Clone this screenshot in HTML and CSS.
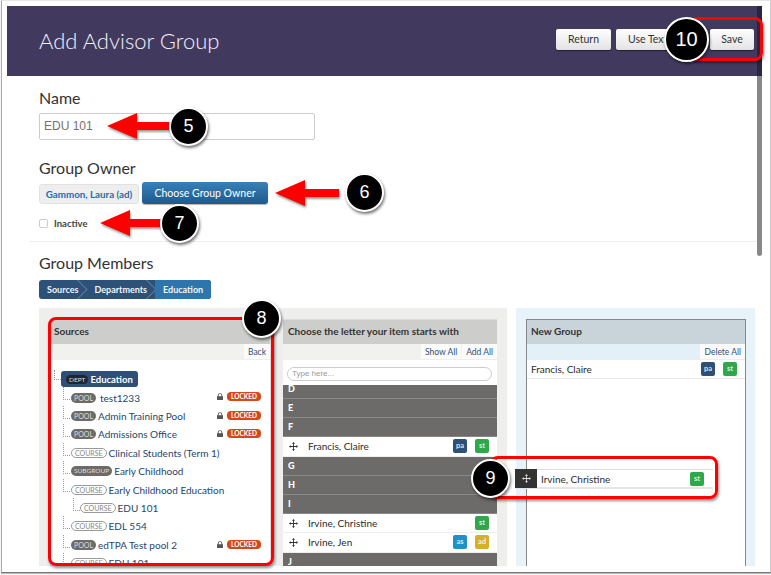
FILE: index.html
```html
<!DOCTYPE html>
<html lang="en">
<head>
<meta charset="utf-8">
<title>Add Advisor Group</title>
<link rel="stylesheet" href="styles.css">
</head>
<body>
<svg class="defs" width="0" height="0" aria-hidden="true">
  <defs>
    <symbol id="move" viewBox="0 0 12 12"><path d="M6 0 8 2.2H6.6V5.4H9.8V4L12 6 9.8 8V6.6H6.6V9.8H8L6 12 4 9.8H5.4V6.6H2.2V8L0 6 2.2 4V5.4H5.4V2.2H4Z"/></symbol>
    <symbol id="lock" viewBox="0 0 8 9"><path d="M1 4V2.6a3 2.6 0 0 1 6 0V4h.5c.3 0 .5.2.5.5v4c0 .3-.2.5-.5.5h-7C.2 9 0 8.8 0 8.500v-4C0 4.200.2 4 .5 4Zm1.200 0h3.600V2.600a1.800 1.600 0 0 0-3.600 0Z"/></symbol>
    <symbol id="arrow" viewBox="0 0 64 26"><path d="M0 13 30 0V9H64V17H30V26Z"/></symbol>
  </defs>
</svg>
<div class="window">
  <header class="topbar">
    <h1>Add Advisor Group</h1>
    <div class="actions">
      <button class="btn btn-return">Return</button>
      <button class="btn btn-text">Use Text Only</button>
      <button class="btn btn-save">Save</button>
    </div>
  </header>
  <main class="content">
    <section class="form-top">
      <h2 class="name-title">Name</h2>
      <div class="text-input">EDU 101</div>
      <h2 class="owner-title">Group Owner</h2>
      <div class="owner">
        <span class="owner-chip">Gammon, Laura (ad)</span>
        <button class="btn-primary">Choose Group Owner</button>
      </div>
      <label class="inactive"><span class="checkbox"></span>Inactive</label>
    </section>
    <section class="members">
      <h2>Group Members</h2>
      <nav class="crumbs">
        <span class="crumb">Sources</span>
        <span class="crumb">Departments</span>
        <span class="crumb crumb-active">Education</span>
      </nav>
      <div class="columns">
        <div class="well well-grey">
          <div class="panel panel-sources">
            <div class="panel-head">Sources</div>
            <div class="toolbar"><span class="tool">Back</span></div>
            <ul class="tree">
              <li class="node"><span class="dept"><b>DEPT</b>Education</span></li>
              <li class="node l1"><i class="tag tag-dark">POOL</i><a class="wide">test1233</a><svg class="lock"><use href="#lock"/></svg><i class="locked">LOCKED</i></li>
              <li class="node l1"><i class="tag tag-dark">POOL</i><a>Admin Training Pool</a><svg class="lock"><use href="#lock"/></svg><i class="locked">LOCKED</i></li>
              <li class="node l1"><i class="tag tag-dark">POOL</i><a>Admissions Office</a><svg class="lock"><use href="#lock"/></svg><i class="locked">LOCKED</i></li>
              <li class="node l1"><i class="tag tag-line">COURSE</i><a>Clinical Students (Term 1)</a></li>
              <li class="node l1"><i class="tag tag-dark tag-sub">SUBGROUP</i><a>Early Childhood</a></li>
              <li class="node l1"><i class="tag tag-line">COURSE</i><a>Early Childhood Education</a></li>
              <li class="node l2"><i class="tag tag-line">COURSE</i><a>EDU 101</a></li>
              <li class="node l1"><i class="tag tag-line">COURSE</i><a>EDL 554</a></li>
              <li class="node l1"><i class="tag tag-dark">POOL</i><a>edTPA Test pool 2</a><svg class="lock"><use href="#lock"/></svg><i class="locked">LOCKED</i></li>
              <li class="node l1"><i class="tag tag-line">COURSE</i><a>EDU 101</a></li>
            </ul>
          </div>
          <div class="panel panel-letters">
            <div class="panel-head">Choose the letter your item starts with</div>
            <div class="toolbar"><span class="tool">Show All</span><span class="tool">Add All</span></div>
            <div class="search-wrap"><div class="search">Type here...</div></div>
            <div class="letters">
              <div class="letter letter-cut">D</div>
              <div class="letter">E</div>
              <div class="letter">F</div>
              <div class="person"><svg class="grip"><use href="#move"/></svg><span class="pname">Francis, Claire</span><i class="role pa">pa</i><i class="role st">st</i></div>
              <div class="letter">G</div>
              <div class="letter">H</div>
              <div class="letter">I</div>
              <div class="person"><svg class="grip"><use href="#move"/></svg><span class="pname">Irvine, Christine</span><i class="role st">st</i></div>
              <div class="person"><svg class="grip"><use href="#move"/></svg><span class="pname">Irvine, Jen</span><i class="role as">as</i><i class="role ad">ad</i></div>
              <div class="letter">J</div>
            </div>
          </div>
        </div>
        <div class="well well-blue">
          <div class="panel panel-group">
            <div class="panel-head">New Group</div>
            <div class="toolbar"><span class="tool">Delete All</span></div>
            <div class="member"><span class="pname">Francis, Claire</span><i class="role pa">pa</i><i class="role st">st</i></div>
          </div>
        </div>
      </div>
    </section>
  </main>
  <div class="scrollbar"></div>

  <div class="drag-row"><span class="drag-handle"><svg class="grip"><use href="#move"/></svg></span><span class="pname">Irvine, Christine</span><i class="role st">st</i></div>

  <div class="box box-save"></div>
  <div class="box box-sources"></div>
  <div class="box box-drag"></div>
  <svg class="arrow arrow-5"><use href="#arrow"/></svg>
  <svg class="arrow arrow-6"><use href="#arrow"/></svg>
  <svg class="arrow arrow-7"><use href="#arrow"/></svg>
  <div class="step step-5">5</div>
  <div class="step step-6">6</div>
  <div class="step step-7">7</div>
  <div class="step step-8">8</div>
  <div class="step step-9">9</div>
  <div class="step step-10">10</div>
</div>
</body>
</html>
```
FILE: styles.css
```css
* { box-sizing: border-box; }
html, body { margin: 0; padding: 0; background: #fff; }
body { width: 771px; height: 575px; overflow: hidden; font-family: Lato, "Liberation Sans", sans-serif; color: #333; }
.defs { display: block; height: 0; }
h1, h2 { margin: 0; font-weight: 400; }
ul { list-style: none; margin: 0; padding: 0; }
i { font-style: normal; }
button { font-family: inherit; cursor: default; }

.window { position: relative; width: 770px; height: 573px; border-left: 1px solid #aaa; border-bottom: 1px solid #777; border-right: 1px solid #ccc; border-top: 1px solid #e6e6e6; margin-left: 1px; padding: 5px 0 0 5px; overflow: hidden; box-shadow: 0 1px 1px #bbb; }

.topbar { display: flex; align-items: flex-start; justify-content: space-between; width: 750px; height: 70px; background: #423a5e; padding: 22px 3px 0 32px; }
.topbar h1 { font-size: 22px; line-height: 25px; font-weight: 300; color: #f2f1f5; }
.actions { display: flex; gap: 5px; margin-top: 1px; }
.btn { height: 21px; padding: 0; border: 0; border-radius: 2px; background: linear-gradient(#fff, #e3e3e3); box-shadow: 0 1px 1px rgba(0,0,0,.5); color: #333; font-size: 10.500px; line-height: 21px; white-space: nowrap; overflow: hidden; }
.btn-return { width: 55px; }
.btn-text { width: 89px; text-align: left; padding-left: 12px; }
.btn-save { width: 44px; }

.content { width: 750px; height: 491px; overflow: hidden; background: #fff; }
.form-top { height: 166px; padding: 13px 0 0 10px; border-bottom: 1px solid #efefef; margin-left: 22px; }
.name-title, .owner-title, .members h2 { font-size: 16px; line-height: 18px; color: #333; }
.text-input { width: 276px; height: 27px; margin-top: 6px; padding-left: 4px; border: 1px solid #ccc; border-radius: 2px; font-family: "Liberation Sans", sans-serif; font-size: 12px; line-height: 25px; color: #77716c; }
.owner-title { margin-top: 19px; }
.owner { display: flex; align-items: flex-start; gap: 3px; margin-top: 5px; }
.owner-chip { width: 100px; height: 20px; margin-top: 2px; background: #eee; border: 1px solid #e2e2e2; border-radius: 3px; color: #1f6cb0; font-size: 9.800px; font-weight: 700; line-height: 18px; text-align: center; white-space: nowrap; }
.btn-primary { width: 126px; height: 22px; padding: 0; border: 0; border-radius: 3px; background: linear-gradient(#3880b8, #1d5a8e); color: #fff; font-size: 10.500px; line-height: 20px; box-shadow: 0 1px 1px rgba(0,0,0,.3); }
.inactive { display: flex; align-items: center; gap: 6px; margin-top: 12px; height: 14px; font-size: 9.500px; font-weight: 700; color: #444; }
.checkbox { width: 9px; height: 9px; border: 1px solid #ccc; border-radius: 2px; background: #fff; }

.members { padding: 12px 0 0 32px; }
.crumbs { display: flex; width: 172px; height: 19px; margin-top: 8px; border-radius: 3px; overflow: hidden; background: #2d5179; }
.crumb { padding: 0 0 0 8px; color: #f2f5f8; font-size: 9px; font-weight: 700; line-height: 19px; margin-right: 8px; position: relative; }
.crumb::after { content: ""; position: absolute; top: -1px; right: -7px; width: 14px; height: 14px; transform: translateY(3px) rotate(45deg) scale(.95); border-top: 1px solid #5f7fa3; border-right: 1px solid #5f7fa3; }
.crumb-active { flex: 1; margin: 0; background: #2c76ad; padding-left: 8px; }
.crumb-active::after { display: none; }

.columns { display: flex; gap: 9px; margin-top: 9px; width: 716px; height: 258px; }
.well { height: 258px; padding: 11px 10px 0; overflow: hidden; }
.well-grey { display: flex; gap: 12px; width: 468px; background: #eeeeec; }
.well-blue { width: 239px; background: #e7f2f9; }
.panel { height: 247px; background: #fff; overflow: hidden; }
.panel-sources { width: 222px; margin-left: 1px; border: 1px solid #ddd; }
.panel-letters { width: 215px; border-top: 1px solid #ddd; }
.panel-group { width: 220px; border: 1px solid #888; border-bottom: 0; }
.panel-head { height: 24px; padding-left: 5px; background: #cdcdcb; font-size: 10px; font-weight: 700; line-height: 22px; color: #333; white-space: nowrap; }
.panel-sources .panel-head { padding-left: 3px; }
.panel-group .panel-head { background: #c9d3da; padding-left: 4px; }
.toolbar { display: flex; justify-content: flex-end; gap: 1px; height: 16px; background: #f1f1f0; }
.panel-group .toolbar { background: #e4f0f7; }
.tool { padding: 0 4px; background: #fbfbfb; color: #2d4f78; font-size: 8.500px; line-height: 16px; border-bottom: 1px solid #eee; }

.tree { padding: 10px 0 0 10px; }
.node { display: flex; align-items: center; height: 18.400px; position: relative; color: #24456e; font-size: 10px; white-space: nowrap; }
.node a { margin-left: 2px; }
.node a.wide { margin-left: 4px; }
.node::before { content: ""; position: absolute; left: 2px; top: -1px; width: 6px; height: 12px; border-left: 1px dotted #999; border-bottom: 1px dotted #999; }
.l1 { padding-left: 10px; }
.l2 { padding-left: 19px; }
.l2::before { left: 12px; }
.node:first-child { padding-left: 0; }
.node:first-child::before { left: -7px; top: 0; height: 9px; }
.dept { display: flex; align-items: center; gap: 2px; height: 16px; padding: 0 5px; background: #2d4f78; border-radius: 3px; color: #fff; font-weight: 700; font-size: 9.500px; }
.dept b { padding: 0 3px; height: 9px; line-height: 9px; background: #1f2630; border-radius: 5px; font-size: 6.500px; color: #ddd; font-weight: 400; }
.tag { height: 10px; padding: 0 3px; border-radius: 5px; font-size: 7px; line-height: 10px; }
.tag-dark { background: #6d6a67; color: #ddd; }
.tag-sub { font-size: 6.500px; }
.tag-line { border: 1px solid #999; color: #888; line-height: 8px; background: #fff; }
.lock { width: 6px; height: 7px; fill: #555; position: absolute; right: 47px; top: 5px; }
.locked { position: absolute; right: 9px; top: 4px; width: 34px; height: 9px; background: #d3481c; border-radius: 4px; color: #fff; font-size: 6.500px; line-height: 9px; text-align: center; font-weight: 700; }

.search-wrap { height: 25px; padding: 7px 5px 0 4px; background: #fff; }
.search { height: 14px; padding-left: 4px; border: 1px solid #ccc; border-radius: 7px; color: #999; font-size: 8px; line-height: 12px; font-family: "Liberation Sans", sans-serif; }
.letters { display: flex; flex-direction: column; }
.letter { flex: none; height: 19.200px; padding-left: 5px; background: #6d6b69; border-bottom: 1px solid #888; color: #fff; font-size: 9px; font-weight: 900; line-height: 18px; }
.letter-cut { height: 14px; line-height: 8px; }
.person { display: flex; align-items: center; flex: none; height: 19.200px; padding-right: 8px; gap: 8px; background: #fff; border-bottom: 1px solid #eee; }
.grip { width: 9px; height: 9px; fill: #333; flex: none; }
.person .grip { margin: 0 2px 0 6px; }
.pname { flex: 1; font-size: 10px; color: #2b2b2b; white-space: nowrap; }
.role { flex: none; width: 14px; height: 14px; border-radius: 2px; color: rgba(255,255,255,.85); font-size: 7.500px; line-height: 14px; text-align: center; font-weight: 700; }
.pa { background: #2d4f78; }
.st { background: #2ea84a; }
.as { background: #2190c8; }
.ad { background: #d9ad2e; }
.member { display: flex; align-items: center; gap: 8px; height: 19px; padding: 0 8px 0 4px; border-bottom: 1px solid #e8e8e8; }

.scrollbar { position: absolute; left: 755px; top: 5px; width: 5px; height: 250px; background: #888; border-radius: 0 0 3px 3px; box-shadow: inset 0 70px 0 #2a2540; }

.drag-row { position: absolute; left: 513px; top: 468px; display: flex; align-items: center; gap: 8px; width: 198px; height: 20px; padding-right: 9px; background: #fff; border-top: 1px solid #ddd; border-bottom: 2px solid #e6e6e6; }
.drag-handle { display: flex; align-items: center; justify-content: center; width: 22px; height: 19px; background: #333; margin-right: -4px; }
.drag-handle .grip { fill: #ddd; }

.box { position: absolute; border: 3px solid #ff0000; border-radius: 8px; box-shadow: 1px 2px 3px rgba(0,0,0,.45); }
.box-save { left: 688px; top: 16px; width: 73px; height: 44px; }
.box-sources { left: 46px; top: 316px; width: 226px; height: 249px; }
.box-drag { left: 488px; top: 455px; width: 228px; height: 43px; }

.arrow { position: absolute; width: 64px; height: 26px; fill: #f00; filter: drop-shadow(1px 2px 1px rgba(0,0,0,.4)); }
.arrow-5 { left: 105px; top: 112px; }
.arrow-6 { left: 273px; top: 179px; }
.arrow-7 { left: 98px; top: 209px; }

.step { position: absolute; width: 39px; height: 39px; border: 2px solid #fff; border-radius: 50%; background: #000; color: #fff; font-family: "Liberation Sans", sans-serif; font-size: 18px; line-height: 35px; text-align: center; box-shadow: 1px 2px 3px rgba(0,0,0,.55); }
.step-5 { left: 167px; top: 106px; }
.step-6 { left: 343px; top: 172px; }
.step-7 { left: 158px; top: 203px; }
.step-8 { left: 240px; top: 298px; }
.step-9 { left: 469px; top: 458px; }
.step-10 { left: 662px; top: 16px; width: 45px; height: 45px; line-height: 41px; font-size: 20px; }
```
